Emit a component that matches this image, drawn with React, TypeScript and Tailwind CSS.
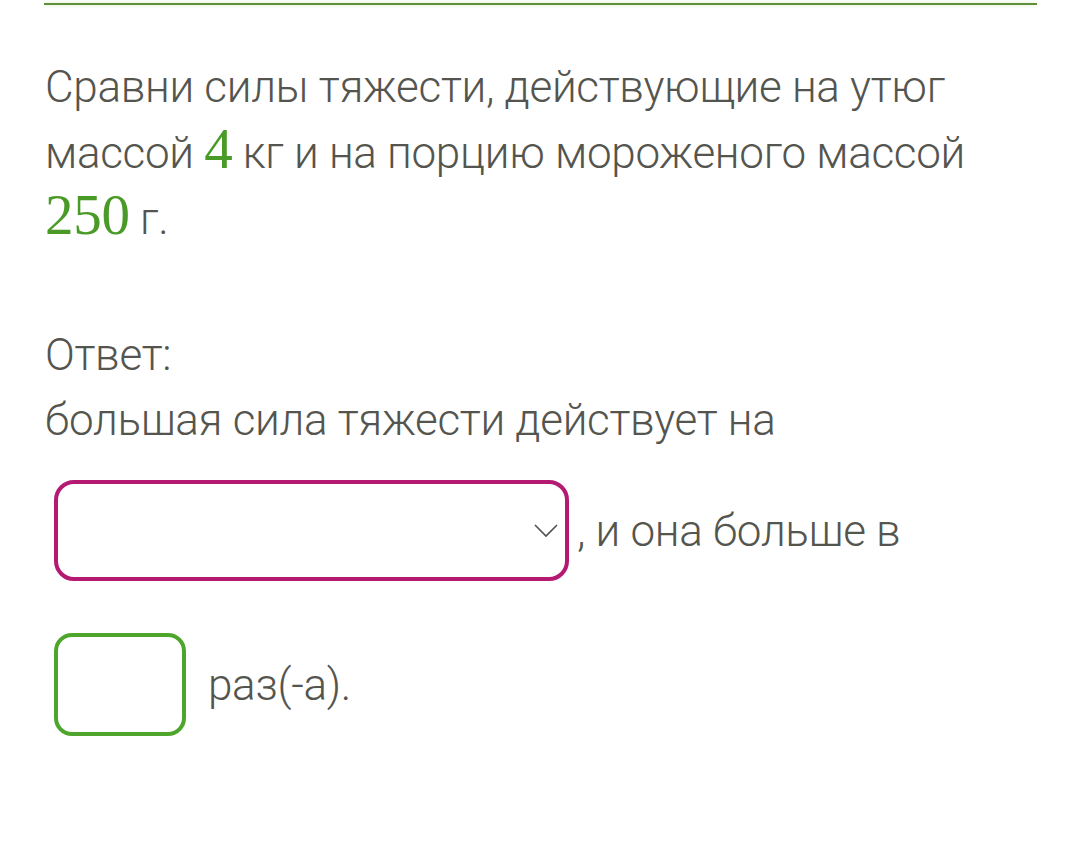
function Num({ children }: { children: React.ReactNode }) {
  return (
    <span className="text-[#4a9a28] text-[57px] leading-none" style={{ fontFamily: '"Liberation Serif", serif' }}>
      {children}
    </span>
  );
}

export default function App() {
  return (
    <div
      className="w-[1068px] h-[857px] bg-white overflow-hidden text-[#55554f] font-light"
      style={{ fontFamily: 'Roboto, "Noto Sans", sans-serif' }}
    >
      <div className="ml-[44px] mr-[31px] h-[2px] mt-[3px] bg-[#5f8f3c] shadow-[0_0_4px_#d8f0c0]" />

      <div className="pl-[45px] pr-[20px] pt-[50px]">
        <p className="text-[44px] leading-[65px] tracking-[-0.3px]">
          Сравни силы тяжести, действующие на утюг
          <br />
          массой <Num>4</Num> кг и на порцию мороженого массой
          <br />
          <Num>250</Num> г.
        </p>

        <div className="mt-[71px] text-[44px] leading-[65px] tracking-[-0.3px]">
          <p>Ответ:</p>
          <p>большая сила тяжести действует на</p>
        </div>

        <div className="mt-[27px] flex items-center text-[44px] tracking-[-0.3px]">
          <div className="ml-[9px] w-[515px] h-[101px] border-[4px] border-[#b51a72] rounded-[20px] flex items-center justify-end pr-[7px]">
            <svg width="24" height="14" viewBox="0 0 24 14" fill="none" stroke="#505050" strokeWidth="1.6">
              <polyline points="1,1 12,12 23,1" />
            </svg>
          </div>
          <span className="ml-[8px]">, и она больше в</span>
        </div>

        <div className="mt-[52px] flex items-center text-[44px] tracking-[-0.3px]">
          <div className="ml-[9px] w-[132px] h-[103px] border-[4px] border-[#4ea52c] rounded-[18px]" />
          <span className="ml-[22px]">раз(-а).</span>
        </div>
      </div>
    </div>
  );
}
